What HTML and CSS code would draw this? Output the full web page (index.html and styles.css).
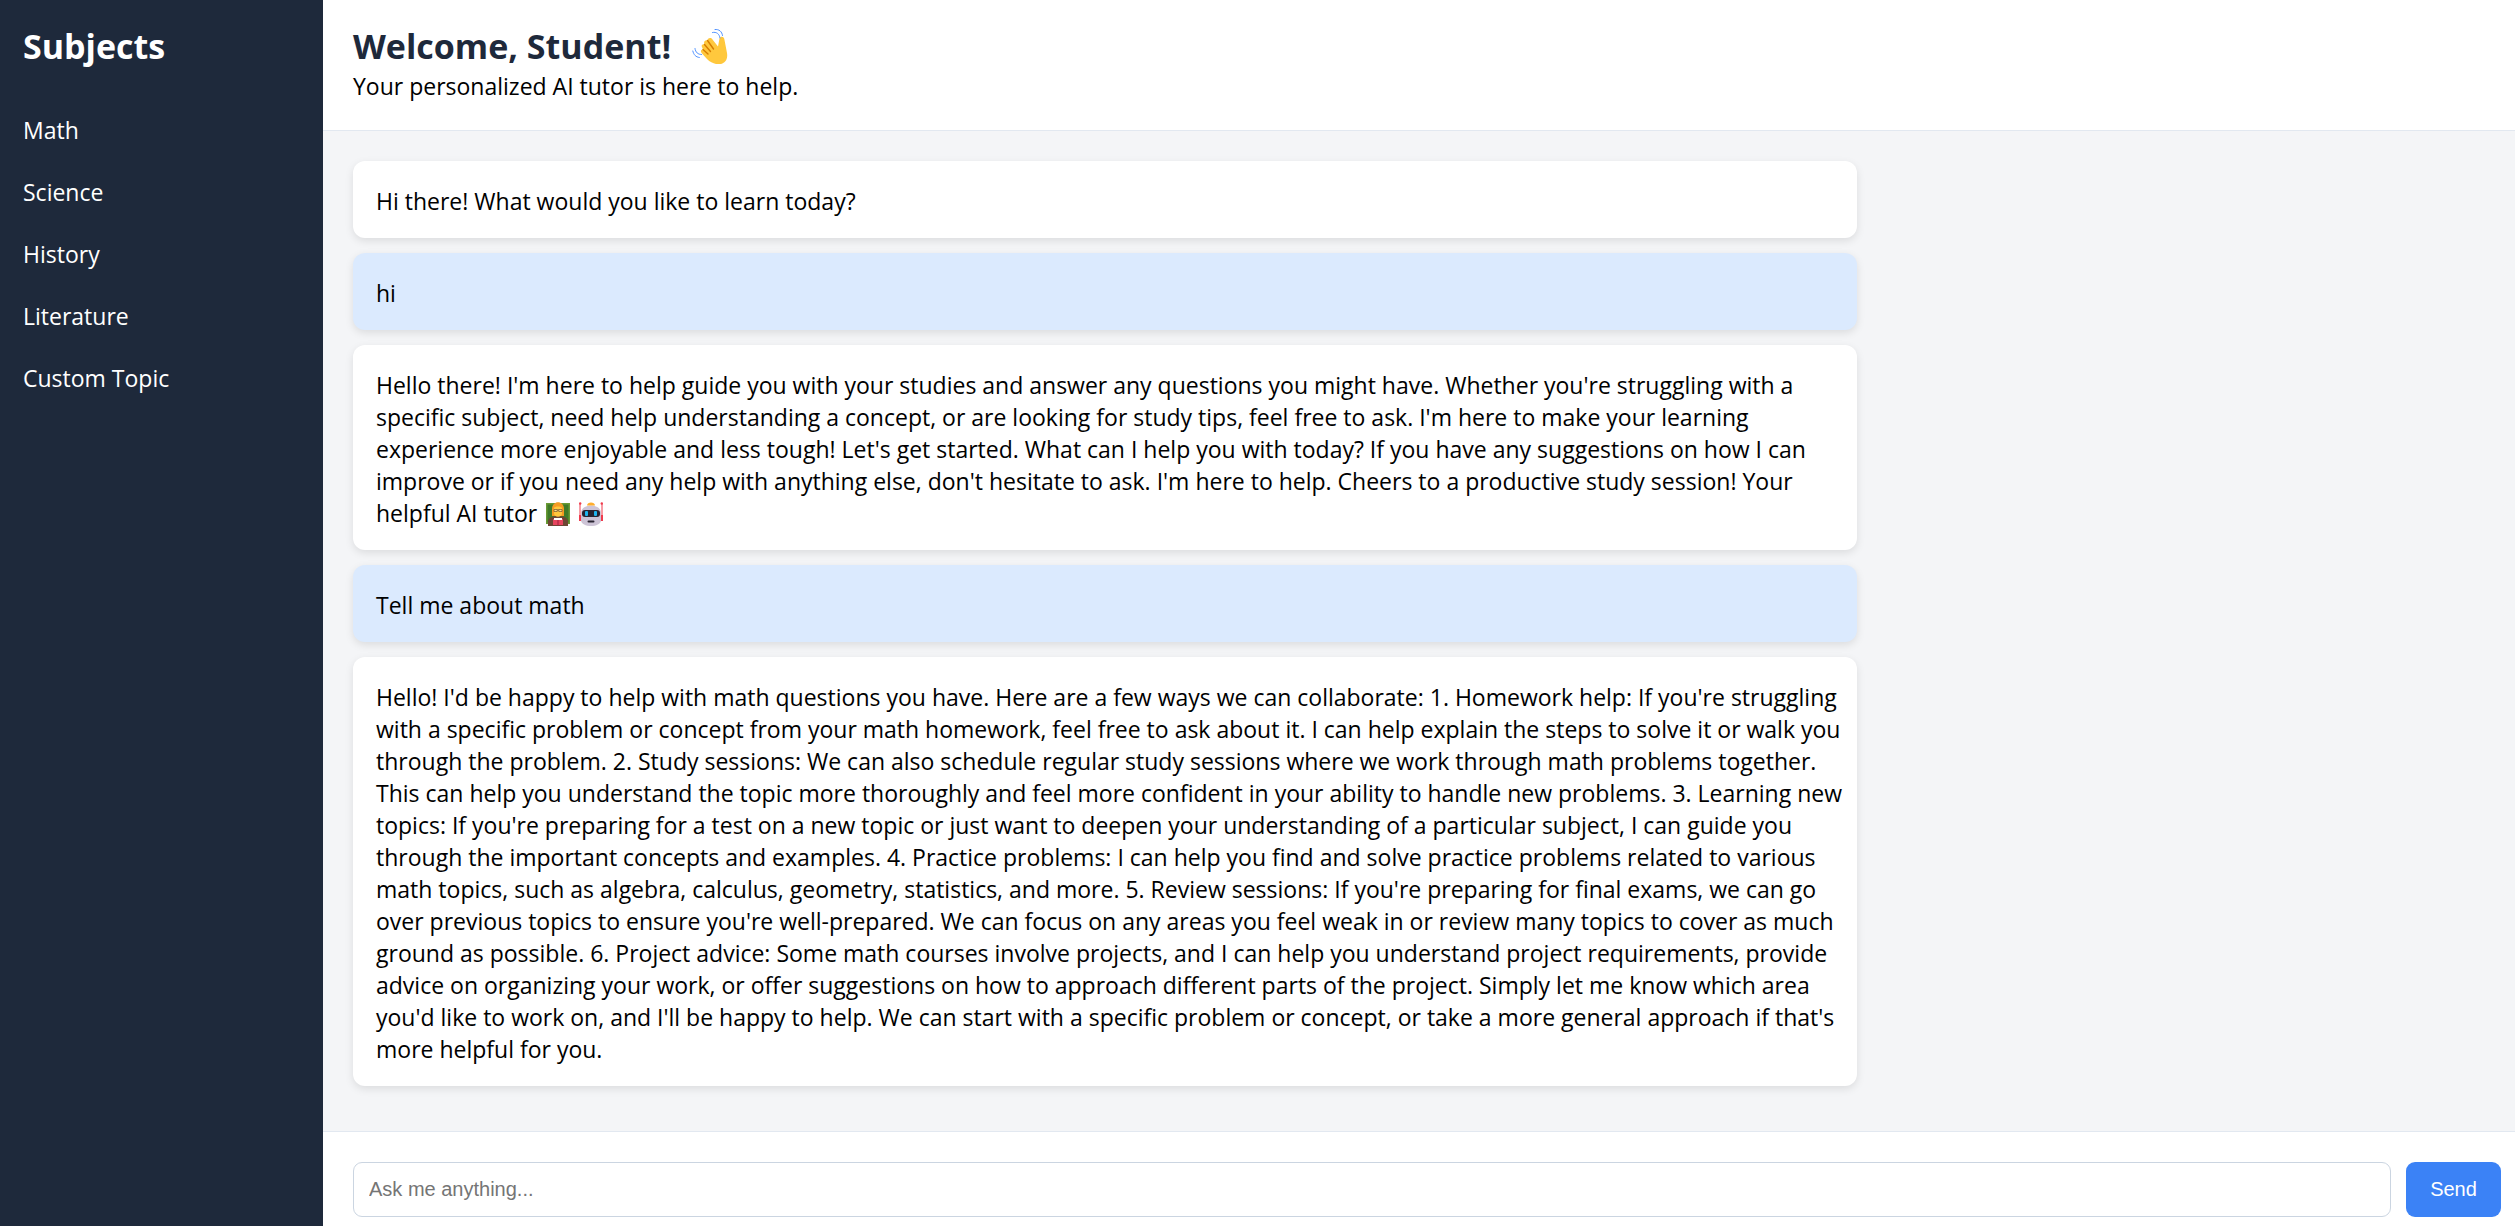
FILE: index.html
```html
<!DOCTYPE html>
<html lang="en">
<head>
<meta charset="utf-8">
<meta name="viewport" content="width=device-width, initial-scale=1">
<title>AI Tutor</title>
<link rel="stylesheet" href="styles.css">
</head>
<body>
<div class="app">
  <aside class="sidebar">
    <h2 class="title">Subjects</h2>
    <nav>
      <ul class="subjects">
        <li><a href="#math">Math</a></li>
        <li><a href="#science">Science</a></li>
        <li><a href="#history">History</a></li>
        <li><a href="#literature">Literature</a></li>
        <li><a href="#custom">Custom Topic</a></li>
      </ul>
    </nav>
  </aside>
  <main class="main">
    <header class="header">
      <h1 class="title">Welcome, Student!
        <svg class="wave" viewBox="0 0 36 36" role="img" aria-label="waving hand">
          <path d="M15 31 10 25.500C8 23.500 9 21.500 11 21.500L10.500 20C8.500 17.500 10.500 15.500 12.500 16.500C11 13.500 13.500 11.500 15.500 12.500C16 9.500 19 9.500 20.500 11.500L26 18.500L27.500 10.500C28.500 7.500 32.500 8.500 32.500 12L35 25C37 37 24 40 15 31Z" fill="#ffc83d"/>
          <path d="m11 21.500 5 4.500M12.500 16.500l6 7M15.500 12.500l6 8.500" fill="none" stroke="#d67d00" stroke-width="1.400" stroke-linecap="round"/>
          <path d="M20.500 4.500c4-1 7 1.500 7.500 5.500M23 1.500c4-.5 7 2 7.500 6M3 20.500c.5 4 3 6 6.500 6M.8 23c1 4 3 6 6.500 6.500" fill="none" stroke="#5092ff" stroke-width="1" stroke-linecap="round"/>
        </svg>
      </h1>
      <p class="tagline">Your personalized AI tutor is here to help.</p>
    </header>
    <section class="chat" aria-label="Conversation">
      <p class="message">Hi there! What would you like to learn today?</p>
      <p class="message user">hi</p>
      <p class="message">Hello there! I'm here to help guide you with your studies and answer any questions you might have. Whether you're struggling with a<br>
        specific subject, need help understanding a concept, or are looking for study tips, feel free to ask. I'm here to make your learning<br>
        experience more enjoyable and less tough! Let's get started. What can I help you with today? If you have any suggestions on how I can<br>
        improve or if you need any help with anything else, don't hesitate to ask. I'm here to help. Cheers to a productive study session! Your<br>
        helpful AI tutor
        <svg class="emoji" viewBox="0 0 24 24" role="img" aria-label="teacher">
          <path d="M0 1h24v21H0z" fill="#6a9a35"/><path d="M1.500 2.500h21v18h-21z" fill="#3f7a28"/>
          <path d="M6 14V7c0-9 12-9 12 0v7z" fill="#f59b23"/>
          <path d="M2 24v-4c0-4 4-6 10-6s10 2 10 6v4z" fill="#6d4534"/>
          <path d="M8 6c1-2 7-2 8 0v5c0 5-8 5-8 0z" fill="#ffc83d"/>
          <path d="M8 7.500h3.200v2H8zM12.800 7.500H16v2h-3.200zM11 8h2" fill="#ffdf85" stroke="#5b4030" stroke-width=".6"/>
          <path d="M7 17h10v6H7z" fill="#e6455e"/><path d="M8 16h8v2H8z" fill="#fff"/><path d="M12 18v6" stroke="#a52040"/>
        </svg>
        <svg class="emoji" viewBox="0 0 24 24" role="img" aria-label="robot">
          <path d="M1 2v15M23 2v15" stroke="#ef3b4c" stroke-width="1"/><circle cx="1.200" cy="1.500" r="1.200" fill="#ef3b4c"/><circle cx="22.800" cy="1.500" r="1.200" fill="#ef3b4c"/>
          <path d="M0 13h3v6H0zM21 13h3v6h-3z" fill="#ef3b4c"/>
          <path d="M2 11c0-10 20-10 20 0v7c0 8-20 8-20 0z" fill="#cdc4d6"/>
          <path d="M8 3.500c0-4 8-4 8 0z" fill="#ffae2e"/>
          <rect x="3" y="8" width="18" height="7" rx="3" fill="#292431"/><rect x="6" y="9" width="3" height="5" rx="1" fill="#1eb5ef"/><rect x="15" y="9" width="3" height="5" rx="1" fill="#1eb5ef"/>
          <rect x="8.500" y="18.500" width="7" height="2" rx="1" fill="#292431"/>
        </svg></p>
      <p class="message user">Tell me about math</p>
      <p class="message">Hello! I'd be happy to help with math questions you have. Here are a few ways we can collaborate: 1. Homework help: If you're struggling<br>
        with a specific problem or concept from your math homework, feel free to ask about it. I can help explain the steps to solve it or walk you<br>
        through the problem. 2. Study sessions: We can also schedule regular study sessions where we work through math problems together.<br>
        This can help you understand the topic more thoroughly and feel more confident in your ability to handle new problems. 3. Learning new<br>
        topics: If you're preparing for a test on a new topic or just want to deepen your understanding of a particular subject, I can guide you<br>
        through the important concepts and examples. 4. Practice problems: I can help you find and solve practice problems related to various<br>
        math topics, such as algebra, calculus, geometry, statistics, and more. 5. Review sessions: If you're preparing for final exams, we can go<br>
        over previous topics to ensure you're well-prepared. We can focus on any areas you feel weak in or review many topics to cover as much<br>
        ground as possible. 6. Project advice: Some math courses involve projects, and I can help you understand project requirements, provide<br>
        advice on organizing your work, or offer suggestions on how to approach different parts of the project. Simply let me know which area<br>
        you'd like to work on, and I'll be happy to help. We can start with a specific problem or concept, or take a more general approach if that's<br>
        more helpful for you.</p>
    </section>
    <form class="composer">
      <input class="field" type="text" placeholder="Ask me anything..." aria-label="Ask me anything">
      <button class="send" type="button">Send</button>
    </form>
  </main>
</div>
</body>
</html>
```
FILE: styles.css
```css
* {
  box-sizing: border-box;
}

body {
  margin: 0;
  font: 23px/32px "Segoe UI", "Open Sans", sans-serif;
  color: #000;
  background: #f4f5f7;
}

.app {
  display: flex;
  min-height: 100vh;
}

.sidebar {
  flex: 0 0 323px;
  padding: 22px 23px;
  color: #fff;
  background: #1e293b;
}

.title {
  margin: 0;
  font-size: 34px;
  line-height: 48px;
  font-weight: 700;
}

.subjects {
  display: grid;
  gap: 30px;
  margin: 44px 0 0;
  padding: 0;
  list-style: none;
}

.subjects a {
  display: block;
  color: inherit;
  text-decoration: none;
}

.main {
  display: flex;
  flex: 1;
  flex-direction: column;
  min-width: 0;
}

.header {
  padding: 22px 30px 28px;
  background: #fff;
  border-bottom: 1px solid #e2e8f0;
}

.header .title {
  color: #1e293b;
}

.wave {
  width: 36px;
  height: 36px;
  margin-left: 12px;
  vertical-align: -5px;
}

.tagline {
  margin: 0;
}

.chat {
  display: flex;
  flex: 1;
  flex-direction: column;
  align-items: flex-start;
  gap: 15px;
  padding: 30px 13px 30px 30px;
}

.message {
  width: 70%;
  margin: 0;
  padding: 24px 8px 21px 23px;
  background: #fff;
  border-radius: 12px;
  box-shadow: 0 3px 8px rgba(0, 0, 0, 0.1);
}

.message.user {
  background: #dbeafe;
}

.emoji {
  width: 24px;
  height: 24px;
  margin-left: 3px;
  vertical-align: -4px;
}

.composer {
  display: flex;
  gap: 15px;
  padding: 30px 14px 9px 30px;
  background: #fff;
  border-top: 1px solid #e2e8f0;
}

.field,
.send {
  height: 55px;
  font: 20px "Liberation Sans", Arial, sans-serif;
  border-radius: 9px;
}

.field {
  flex: 1;
  min-width: 0;
  padding: 0 15px;
  background: #fff;
  border: 1px solid #cbd5e1;
}

.field::placeholder {
  color: #757575;
}

.send {
  width: 95px;
  padding: 0;
  color: #fff;
  background: #3b82f6;
  border: 0;
}
```
